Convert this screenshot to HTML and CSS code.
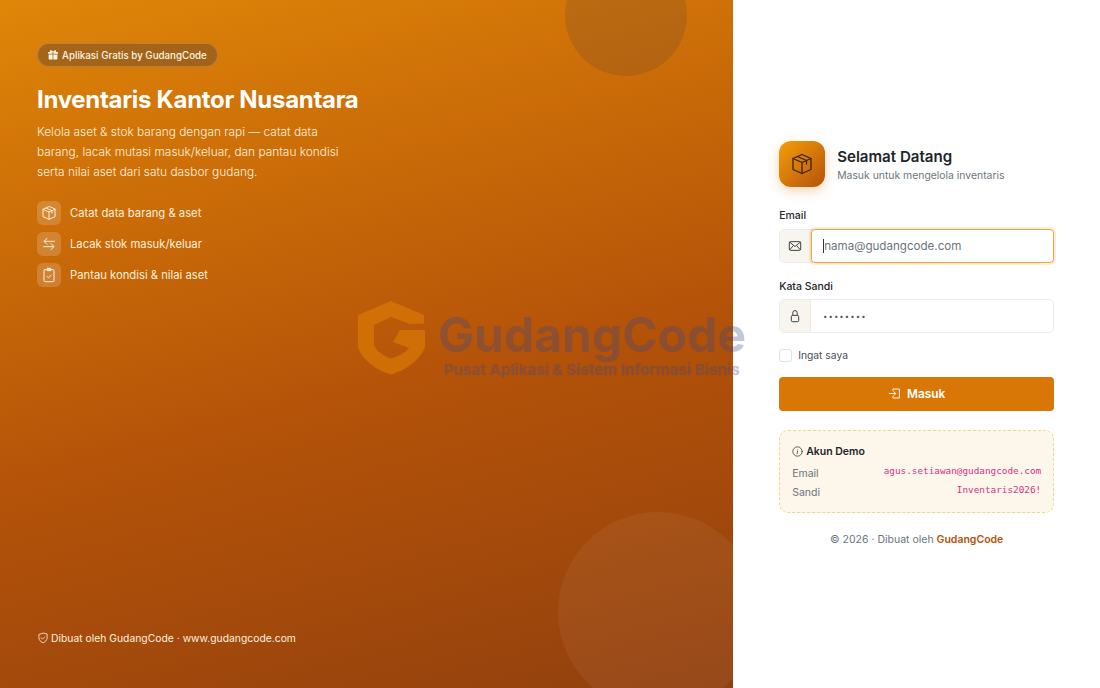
FILE: index.html
```html
<!DOCTYPE html>
<html lang="en">
<head>
  <meta charset="UTF-8">
  <meta name="viewport" content="width=device-width, initial-scale=1.0">
  <title>Login - Inventaris Kantor Nusantara</title>
  <link rel="stylesheet" href="styles.css">
</head>
<body>

  <div class="login-page">
    <section class="hero">
      <span class="circle circle-top"></span>
      <span class="circle circle-bottom"></span>

      <div class="hero-main">
        <span class="badge">
          <svg class="badge-icon" viewBox="0 0 16 16" fill="currentColor">
            <path d="M3 1.800C3 .8 3.900.2 4.800.4c1.300.3 2.500 1.400 3.200 2.500C8.700 1.800 9.900.7 11.200.4 12.100.2 13 .8 13 1.800c0 .5-.1.9-.4 1.200H15a1 1 0 0 1 1 1v2H8.600V3H7.400v3H0V4a1 1 0 0 1 1-1h2.400C3.100 2.700 3 2.300 3 1.800zM1 7.200h6.400V15H2a1 1 0 0 1-1-1zm7.600 0H15V14a1 1 0 0 1-1 1H8.600z"/>
          </svg>
          Aplikasi Gratis by GudangCode
        </span>
        <h1>Inventaris Kantor Nusantara</h1>
        <p class="hero-text">Kelola aset &amp; stok barang dengan rapi — catat data barang, lacak mutasi masuk/keluar, dan pantau kondisi serta nilai aset dari satu dasbor gudang.</p>

        <ul class="feature-list">
          <li>
            <span class="feature-icon">
              <svg viewBox="0 0 24 24" fill="none" stroke="currentColor" stroke-width="1.500" stroke-linejoin="round" stroke-linecap="round">
                <path d="M12 2.500 3 6.500v11l9 4 9-4v-11z"/><path d="M3 6.500l9 4 9-4M12 10.500v11M7.500 4.500l9 4v3.500"/>
              </svg>
            </span>
            Catat data barang &amp; aset
          </li>
          <li>
            <span class="feature-icon">
              <svg viewBox="0 0 24 24" fill="none" stroke="currentColor" stroke-width="1.500" stroke-linejoin="round" stroke-linecap="round">
                <path d="M20 8H5M9 3.500 4.500 8 9 12.500"/><path d="M4 16h15M15 11.500l4.500 4.500-4.500 4.500"/>
              </svg>
            </span>
            Lacak stok masuk/keluar
          </li>
          <li>
            <span class="feature-icon">
              <svg viewBox="0 0 24 24" fill="none" stroke="currentColor" stroke-width="1.500" stroke-linejoin="round" stroke-linecap="round">
                <rect x="4.500" y="4" width="15" height="18" rx="1.500"/><rect x="9" y="2" width="6" height="3.500" rx="1" fill="currentColor"/><path d="M9 14l2.200 2.200L15 12.500"/>
              </svg>
            </span>
            Pantau kondisi &amp; nilai aset
          </li>
        </ul>
      </div>

      <p class="hero-footer">
        <svg viewBox="0 0 16 16" fill="none" stroke="currentColor" stroke-width="1.100" stroke-linejoin="round" stroke-linecap="round">
          <path d="M8 1.500 2.500 3.300v4.200c0 3.200 2.400 5.800 5.500 7 3.100-1.200 5.500-3.800 5.500-7V3.300z"/><path d="M5.600 7.900l1.700 1.700 3.100-3.100"/>
        </svg>
        Dibuat oleh GudangCode · www.gudangcode.com
      </p>
    </section>

    <section class="login-side">
      <div class="login-box">
        <div class="login-head">
          <span class="app-icon">
            <svg viewBox="0 0 24 24" fill="none" stroke="currentColor" stroke-width="1.300" stroke-linejoin="round" stroke-linecap="round">
              <path d="M12 2.500 3 6.500v11l9 4 9-4v-11z"/><path d="M3 6.500l9 4 9-4M12 10.500v11M7.500 4.500l9 4v3.500"/>
            </svg>
          </span>
          <div class="head-text">
            <h2>Selamat Datang</h2>
            <p>Masuk untuk mengelola inventaris</p>
          </div>
        </div>

        <form>
          <label class="field-label" for="email">Email</label>
          <div class="input-group input-focus">
            <span class="input-icon">
              <svg viewBox="0 0 16 16" fill="none" stroke="currentColor" stroke-width="1.100" stroke-linejoin="round">
                <rect x="1.500" y="3" width="13" height="10" rx="1.500"/><path d="M1.800 3.500 8 8.600l6.200-5.100M1.800 12.500 6.200 7.500M14.200 12.500 9.800 7.500"/>
              </svg>
            </span>
            <span class="input-box"><span class="caret"></span><span class="placeholder">nama@gudangcode.com</span></span>
          </div>

          <label class="field-label label-tight" for="password">Kata Sandi</label>
          <div class="input-group">
            <span class="input-icon">
              <svg viewBox="0 0 16 16" fill="none" stroke="currentColor" stroke-width="1.100" stroke-linejoin="round">
                <rect x="3.800" y="7.300" width="8.400" height="7.200" rx="1.500"/><path d="M5.500 7.300V4.300a2.500 2.500 0 0 1 5 0v3"/>
              </svg>
            </span>
            <span class="input-box"><span class="password-dots">••••••••</span></span>
          </div>

          <label class="remember"><span class="check"></span>Ingat saya</label>

          <button class="login-btn" type="button">
            <svg viewBox="0 0 16 16" fill="none" stroke="currentColor" stroke-width="1.100" stroke-linejoin="round" stroke-linecap="round">
              <path d="M6 4V2.500h8v11H6V12"/><path d="M1.500 8h8M7 5.500 9.500 8 7 10.500"/>
            </svg>
            Masuk
          </button>
        </form>

        <div class="demo-card">
          <div class="demo-title">
            <svg viewBox="0 0 16 16" fill="none" stroke="currentColor" stroke-width="1" stroke-linecap="round">
              <circle cx="8" cy="8" r="6.800"/><path d="M8 7.200 7.500 11.300"/><circle cx="8.300" cy="5" r=".6" fill="currentColor" stroke="none"/>
            </svg>
            Akun Demo
          </div>
          <div class="demo-row"><span>Email</span><code>agus.setiawan@gudangcode.com</code></div>
          <div class="demo-row"><span>Sandi</span><code>Inventaris2026!</code></div>
        </div>

        <p class="copyright">© 2026 · Dibuat oleh <a href="#">GudangCode</a></p>
      </div>
    </section>
  </div>

  <!-- watermark sits over both panels -->
  <div class="watermark">
    <svg class="watermark-logo" viewBox="0 0 67 74">
      <path d="M33 0 66 14V22.500L52 23 33 16 16 24V44C19 51 26 55 33 57.500 41 55 47 52 51 47L35 41 42 29H67V46C62 59 48 69 33 73.500 18 69 4 59 0 46V14Z"/>
    </svg>
    <div class="watermark-text">
      <div class="watermark-name">GudangCode</div>
      <div class="watermark-sub">Pusat Aplikasi &amp; Sistem Informasi Bisnis</div>
    </div>
  </div>

</body>
</html>
```

FILE: styles.css
```css
* {
  box-sizing: border-box;
}

body {
  margin: 0;
  height: 100vh;
  font-family: Inter, "Noto Sans", sans-serif;
  color: #212529;
  background-color: white;
  overflow: hidden;
}

.login-page {
  display: flex;
  height: 100vh;
}

/* left panel */
.hero {
  position: relative;
  overflow: hidden;
  flex: 0 0 66.6667%;
  display: flex;
  flex-direction: column;
  justify-content: space-between;
  padding: 43px 37px 44px;
  color: white;
  background: linear-gradient(165deg, #e08608 0%, #c96a08 30%, #b45309 56%, #92400e 100%);
}

.circle {
  position: absolute;
  border-radius: 50%;
}

.circle-top {
  width: 122px;
  height: 122px;
  top: -46px;
  right: 46px;
  background-color: rgba(100, 70, 50, 0.22);
}

.circle-bottom {
  width: 200px;
  height: 200px;
  bottom: -24px;
  right: -25px;
  background-color: rgba(255, 255, 255, 0.05);
}

.hero-main {
  position: relative;
}

.badge {
  display: inline-flex;
  align-items: center;
  gap: 4px;
  height: 24px;
  padding: 0 10px;
  border-radius: 12px;
  border: 1px solid rgba(255, 255, 255, 0.18);
  background-color: rgba(120, 80, 40, 0.55);
  font-size: 9.75px;
  font-weight: 500;
  color: #fdf3e3;
}

.badge-icon {
  width: 10px;
  height: 10px;
}

.hero h1 {
  margin: 18px 0 0;
  font-size: 24px;
  line-height: 29px;
  font-weight: 700;
  letter-spacing: -0.3px;
}

.hero-text {
  margin: 8px 0 0;
  width: 320px;
  font-size: 11.9px;
  line-height: 20px;
  font-weight: 300;
  color: #fdf0dd;
}

.feature-list {
  list-style-type: none;
  margin: 19px 0 0;
  padding: 0;
  display: flex;
  flex-direction: column;
  gap: 7px;
}

.feature-list li {
  display: flex;
  align-items: center;
  gap: 9px;
  font-size: 11.25px;
  color: #fdf0dd;
}

.feature-icon {
  display: flex;
  align-items: center;
  justify-content: center;
  width: 24px;
  height: 24px;
  border-radius: 6px;
  background-color: rgba(255, 255, 255, 0.17);
}

.feature-icon svg {
  width: 16px;
  height: 16px;
}

.hero-footer {
  position: relative;
  display: flex;
  align-items: center;
  gap: 2px;
  margin: 0;
  font-size: 10.35px;
  color: #fdf0dd;
}

.hero-footer svg {
  width: 12px;
  height: 12px;
}

/* right panel */
.login-side {
  flex: 1;
  display: flex;
  align-items: center;
  justify-content: center;
  padding-bottom: 2px;
  background-color: white;
}

.login-box {
  width: 275px;
}

.login-head {
  display: flex;
  align-items: center;
  gap: 12px;
  margin-bottom: 22px;
}

.app-icon {
  display: flex;
  align-items: center;
  justify-content: center;
  width: 46px;
  height: 46px;
  border-radius: 12px;
  color: #3b2205;
  background: linear-gradient(135deg, #f59e0b, #b45309);
  box-shadow: 0 4px 12px rgba(217, 119, 6, 0.3);
}

.app-icon svg {
  width: 24px;
  height: 24px;
}

.head-text {
  padding-top: 3px;
}

.login-head h2 {
  margin: 0;
  font-size: 15.1px;
  line-height: 20px;
  font-weight: 600;
}

.login-head p {
  margin: 2.5px 0 0;
  font-size: 10.4px;
  line-height: 14px;
  color: #6c757d;
}

.field-label {
  display: block;
  margin-bottom: 6px;
  font-size: 10.5px;
  line-height: 14px;
  font-weight: 500;
}

.label-tight {
  margin-bottom: 5px;
}

.input-group {
  display: flex;
  height: 34px;
  margin-bottom: 16px;
  border: 1px solid #e9ecef;
  border-radius: 5px;
}

.input-focus {
  margin-bottom: 17px;
}

.input-icon {
  display: flex;
  align-items: center;
  justify-content: center;
  flex: 0 0 31px;
  padding-top: 1px;
  background-color: #f8f5ef;
  border-right: 1px solid #ece8e0;
  border-radius: 4px 0 0 4px;
  color: #343a40;
}

.input-icon svg {
  width: 14px;
  height: 14px;
}

.input-box {
  flex: 1;
  display: flex;
  align-items: center;
  padding: 1px 0 0 11px;
  font-size: 11.6px;
  color: #6c757d;
  background-color: white;
  border-radius: 0 4px 4px 0;
}

.input-focus .input-box {
  margin: -1px -1px -1px 0;
  border: 1px solid #f0a24a;
  border-radius: 4px;
  box-shadow: 0 0 0 2px rgba(245, 158, 11, 0.18);
}

.caret {
  width: 1px;
  height: 14px;
  background-color: #333;
}

.password-dots {
  font-size: 7px;
  letter-spacing: 1.55px;
  color: #495057;
  padding-left: 1px;
}

.remember {
  display: flex;
  align-items: center;
  gap: 6px;
  font-size: 10.3px;
  color: #495057;
  margin-bottom: 15px;
}

.check {
  width: 13px;
  height: 13px;
  border: 1px solid #dee2e6;
  border-radius: 3px;
}

.login-btn {
  display: flex;
  align-items: center;
  justify-content: center;
  gap: 6px;
  width: 100%;
  height: 34px;
  padding-top: 1px;
  border: none;
  border-radius: 4px;
  color: white;
  font-family: inherit;
  font-size: 11.9px;
  font-weight: 600;
  background-color: #d97706;
}

.login-btn svg {
  width: 13px;
  height: 13px;
}

.demo-card {
  margin-top: 19px;
  padding: 14px 12px 10px 12px;
  height: 83px;
  border: 1px dashed #f5d68f;
  border-radius: 9px;
  background-color: #fdf6ea;
}

.demo-title {
  display: flex;
  align-items: center;
  gap: 3px;
  font-size: 10.5px;
  font-weight: 600;
  margin-bottom: 9px;
}

.demo-title svg {
  width: 11px;
  height: 11px;
}

.demo-row {
  display: flex;
  justify-content: space-between;
  height: 19.5px;
  font-size: 10.5px;
  color: #6c757d;
}

.demo-row code {
  margin-top: -2px;
  font-family: "DejaVu Sans Mono", monospace;
  font-size: 9.35px;
  color: #d63384;
}

.copyright {
  margin: 20px 0 0;
  text-align: center;
  font-size: 10.5px;
  color: #6c757d;
}

.copyright a {
  color: #b45309;
  font-weight: 600;
  text-decoration: none;
}

/* watermark */
.watermark {
  position: fixed;
  top: 301px;
  left: 358px;
  display: flex;
  align-items: flex-start;
  gap: 13px;
  pointer-events: none;
}

.watermark-logo {
  width: 67px;
  height: 74px;
  fill: #d97706;
  opacity: 0.75;
}

.watermark-text {
  margin-top: 9px;
  color: #37488a;
  opacity: 0.3;
}

.watermark-name {
  font-size: 48px;
  line-height: 50px;
  font-weight: 700;
}

.watermark-sub {
  margin: 2px 0 0 6px;
  font-size: 15.2px;
  line-height: 16px;
  font-weight: 700;
  text-shadow: 0 0 1px #37488a;
}
```
